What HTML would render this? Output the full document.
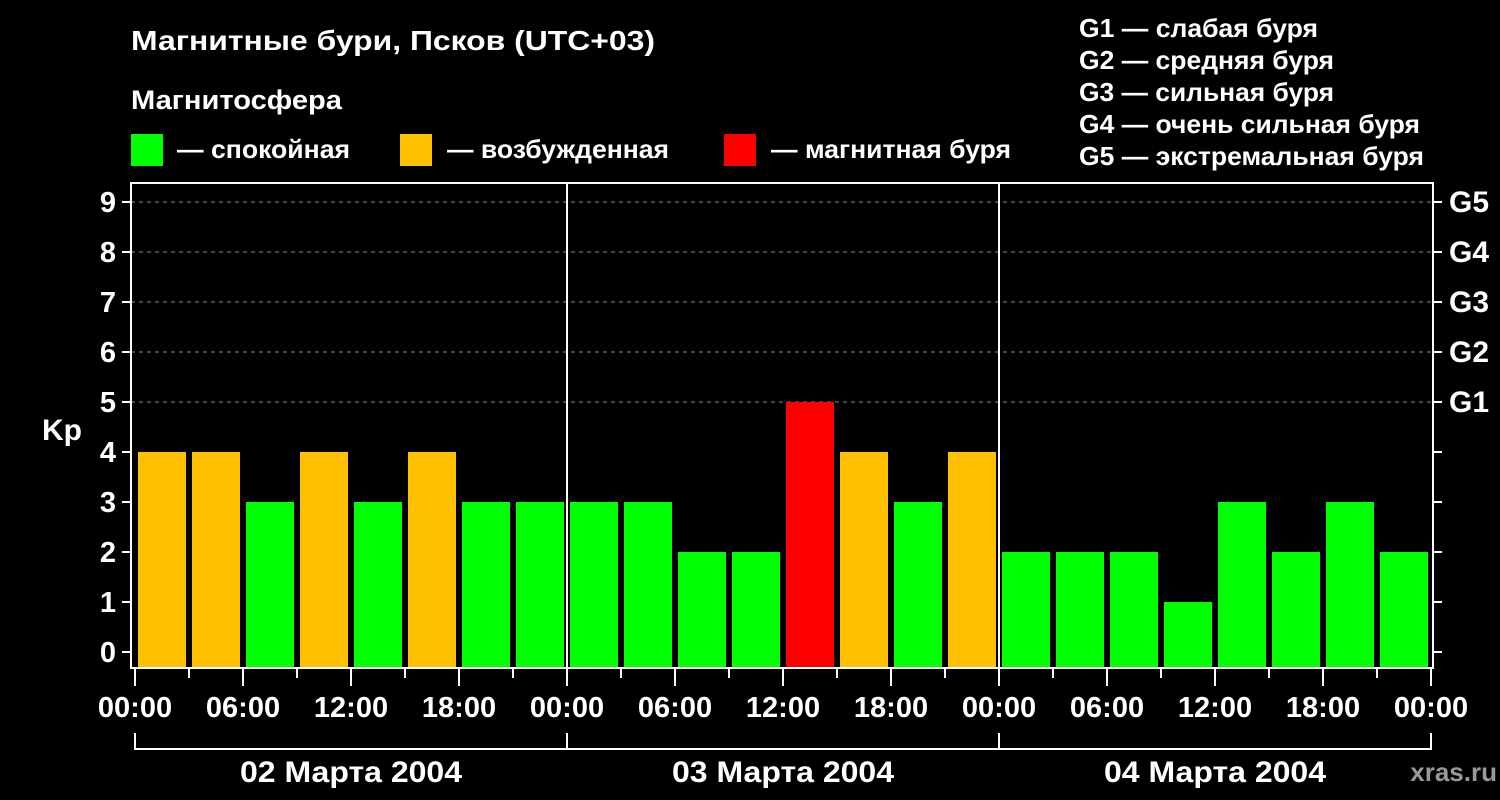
<!DOCTYPE html>
<html><head><meta charset="utf-8"><style>
html,body{margin:0;padding:0;background:#000;}
svg{display:block;}
text{font-family:"Liberation Sans",Arial,sans-serif;font-weight:bold;fill:#fff;}
</style></head><body>
<svg width="1500" height="800" viewBox="0 0 1500 800" xmlns="http://www.w3.org/2000/svg">
<rect width="1500" height="800" fill="#000"/>
<text x="131" y="50" font-size="28" textLength="524" lengthAdjust="spacingAndGlyphs">Магнитные бури, Псков (UTC+03)</text>
<text x="131" y="109" font-size="27" textLength="211" lengthAdjust="spacingAndGlyphs">Магнитосфера</text>
<rect x="131" y="134" width="32" height="32" fill="#00ff00"/>
<text x="177" y="158" font-size="26" textLength="173" lengthAdjust="spacingAndGlyphs">— спокойная</text>
<rect x="400" y="134" width="32" height="32" fill="#ffc000"/>
<text x="447" y="158" font-size="26" textLength="222" lengthAdjust="spacingAndGlyphs">— возбужденная</text>
<rect x="724" y="134" width="32" height="32" fill="#ff0000"/>
<text x="771" y="158" font-size="26" textLength="240" lengthAdjust="spacingAndGlyphs">— магнитная буря</text>
<g font-size="26">
<text x="1079" y="37" textLength="239" lengthAdjust="spacingAndGlyphs">G1 — слабая буря</text>
<text x="1079" y="69" textLength="255" lengthAdjust="spacingAndGlyphs">G2 — средняя буря</text>
<text x="1079" y="101" textLength="255" lengthAdjust="spacingAndGlyphs">G3 — сильная буря</text>
<text x="1079" y="133" textLength="341" lengthAdjust="spacingAndGlyphs">G4 — очень сильная буря</text>
<text x="1079" y="165" textLength="345" lengthAdjust="spacingAndGlyphs">G5 — экстремальная буря</text>
</g>
<g stroke="#888" stroke-width="1" stroke-dasharray="4,4">
<line x1="131" y1="202" x2="1433" y2="202"/>
<line x1="131" y1="252" x2="1433" y2="252"/>
<line x1="131" y1="302" x2="1433" y2="302"/>
<line x1="131" y1="352" x2="1433" y2="352"/>
<line x1="131" y1="402" x2="1433" y2="402"/>
</g>
<g>
<rect x="138" y="452" width="48" height="216" fill="#ffc000"/>
<rect x="192" y="452" width="48" height="216" fill="#ffc000"/>
<rect x="246" y="502" width="48" height="166" fill="#00ff00"/>
<rect x="300" y="452" width="48" height="216" fill="#ffc000"/>
<rect x="354" y="502" width="48" height="166" fill="#00ff00"/>
<rect x="408" y="452" width="48" height="216" fill="#ffc000"/>
<rect x="462" y="502" width="48" height="166" fill="#00ff00"/>
<rect x="516" y="502" width="48" height="166" fill="#00ff00"/>
<rect x="570" y="502" width="48" height="166" fill="#00ff00"/>
<rect x="624" y="502" width="48" height="166" fill="#00ff00"/>
<rect x="678" y="552" width="48" height="116" fill="#00ff00"/>
<rect x="732" y="552" width="48" height="116" fill="#00ff00"/>
<rect x="786" y="402" width="48" height="266" fill="#ff0000"/>
<rect x="840" y="452" width="48" height="216" fill="#ffc000"/>
<rect x="894" y="502" width="48" height="166" fill="#00ff00"/>
<rect x="948" y="452" width="48" height="216" fill="#ffc000"/>
<rect x="1002" y="552" width="48" height="116" fill="#00ff00"/>
<rect x="1056" y="552" width="48" height="116" fill="#00ff00"/>
<rect x="1110" y="552" width="48" height="116" fill="#00ff00"/>
<rect x="1164" y="602" width="48" height="66" fill="#00ff00"/>
<rect x="1218" y="502" width="48" height="166" fill="#00ff00"/>
<rect x="1272" y="552" width="48" height="116" fill="#00ff00"/>
<rect x="1326" y="502" width="48" height="166" fill="#00ff00"/>
<rect x="1380" y="552" width="48" height="116" fill="#00ff00"/>
</g>
<g stroke="#fff" stroke-width="2" fill="none">
<rect x="131" y="183" width="1302" height="485"/>
<line x1="567" y1="183" x2="567" y2="668"/>
<line x1="999" y1="183" x2="999" y2="668"/>
</g>
<g font-size="29" text-anchor="end">
<text x="116" y="212">9</text><text x="116" y="262">8</text><text x="116" y="312">7</text><text x="116" y="362">6</text><text x="116" y="412">5</text><text x="116" y="462">4</text><text x="116" y="512">3</text><text x="116" y="562">2</text><text x="116" y="612">1</text><text x="116" y="662">0</text>
</g>
<text x="42" y="440" font-size="30">Kp</text>
<g font-size="30">
<text x="1449" y="212">G5</text><text x="1449" y="262">G4</text><text x="1449" y="312">G3</text><text x="1449" y="362">G2</text><text x="1449" y="412">G1</text>
</g>
<g font-size="29" text-anchor="middle">
<text x="135" y="717">00:00</text><text x="243" y="717">06:00</text><text x="351" y="717">12:00</text><text x="459" y="717">18:00</text>
<text x="567" y="717">00:00</text><text x="675" y="717">06:00</text><text x="783" y="717">12:00</text><text x="891" y="717">18:00</text>
<text x="999" y="717">00:00</text><text x="1107" y="717">06:00</text><text x="1215" y="717">12:00</text><text x="1323" y="717">18:00</text>
<text x="1431" y="717">00:00</text>
</g>
<g font-size="30" text-anchor="middle">
<text x="351" y="782" textLength="222" lengthAdjust="spacingAndGlyphs">02 Марта 2004</text>
<text x="783" y="782" textLength="222" lengthAdjust="spacingAndGlyphs">03 Марта 2004</text>
<text x="1215" y="782" textLength="222" lengthAdjust="spacingAndGlyphs">04 Марта 2004</text>
</g>
<text x="1497" y="781" font-size="26" text-anchor="end" style="fill:#999">xras.ru</text>
<g stroke="#fff" stroke-width="2">
<line x1="135" y1="669" x2="135" y2="686"/><line x1="189" y1="669" x2="189" y2="678"/>
<line x1="243" y1="669" x2="243" y2="686"/><line x1="297" y1="669" x2="297" y2="678"/>
<line x1="351" y1="669" x2="351" y2="686"/><line x1="405" y1="669" x2="405" y2="678"/>
<line x1="459" y1="669" x2="459" y2="686"/><line x1="513" y1="669" x2="513" y2="678"/>
<line x1="567" y1="669" x2="567" y2="686"/><line x1="621" y1="669" x2="621" y2="678"/>
<line x1="675" y1="669" x2="675" y2="686"/><line x1="729" y1="669" x2="729" y2="678"/>
<line x1="783" y1="669" x2="783" y2="686"/><line x1="837" y1="669" x2="837" y2="678"/>
<line x1="891" y1="669" x2="891" y2="686"/><line x1="945" y1="669" x2="945" y2="678"/>
<line x1="999" y1="669" x2="999" y2="686"/><line x1="1053" y1="669" x2="1053" y2="678"/>
<line x1="1107" y1="669" x2="1107" y2="686"/><line x1="1161" y1="669" x2="1161" y2="678"/>
<line x1="1215" y1="669" x2="1215" y2="686"/><line x1="1269" y1="669" x2="1269" y2="678"/>
<line x1="1323" y1="669" x2="1323" y2="686"/><line x1="1377" y1="669" x2="1377" y2="678"/>
<line x1="1431" y1="669" x2="1431" y2="686"/>
<line x1="122" y1="202" x2="131" y2="202"/><line x1="1433" y1="202" x2="1442" y2="202"/>
<line x1="122" y1="252" x2="131" y2="252"/><line x1="1433" y1="252" x2="1442" y2="252"/>
<line x1="122" y1="302" x2="131" y2="302"/><line x1="1433" y1="302" x2="1442" y2="302"/>
<line x1="122" y1="352" x2="131" y2="352"/><line x1="1433" y1="352" x2="1442" y2="352"/>
<line x1="122" y1="402" x2="131" y2="402"/><line x1="1433" y1="402" x2="1442" y2="402"/>
<line x1="122" y1="452" x2="131" y2="452"/><line x1="1433" y1="452" x2="1442" y2="452"/>
<line x1="122" y1="502" x2="131" y2="502"/><line x1="1433" y1="502" x2="1442" y2="502"/>
<line x1="122" y1="552" x2="131" y2="552"/><line x1="1433" y1="552" x2="1442" y2="552"/>
<line x1="122" y1="602" x2="131" y2="602"/><line x1="1433" y1="602" x2="1442" y2="602"/>
<line x1="122" y1="652" x2="131" y2="652"/><line x1="1433" y1="652" x2="1442" y2="652"/>
</g>
<g stroke="#fff" stroke-width="2" fill="none">
<polyline points="135,733 135,749 1431,749 1431,733"/>
<line x1="567" y1="733" x2="567" y2="749"/>
<line x1="999" y1="733" x2="999" y2="749"/>
</g>
</svg>
</body></html>
